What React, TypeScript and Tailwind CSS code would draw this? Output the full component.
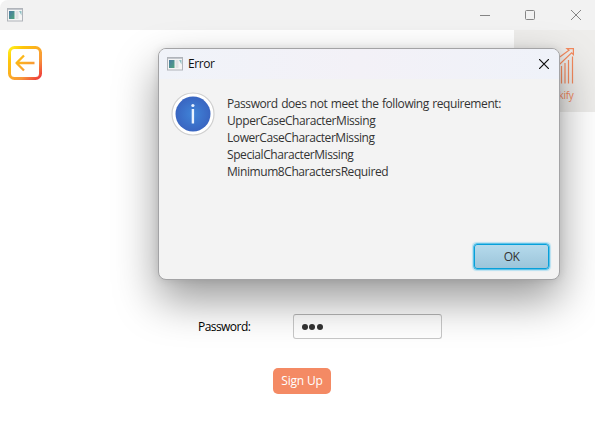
import React from 'react';

function AppIcon() {
  return (
    <svg width="16" height="14" viewBox="0 0 16 14" className="block shrink-0">
      <defs>
        <linearGradient id="pane" x1="0" y1="0" x2="1" y2="1">
          <stop offset="0" stopColor="#4a7aa4" />
          <stop offset="1" stopColor="#4fa37c" />
        </linearGradient>
      </defs>
      <rect x="0.5" y="0.5" width="15" height="12.5" fill="#f4f4f4" stroke="#b0b4ba" />
      <rect x="1" y="1" width="14" height="1" fill="#c3c7cd" />
      <rect x="2" y="3" width="5.5" height="8" fill="url(#pane)" />
      <rect x="8.5" y="3" width="3" height="8" fill="#e0e1e3" />
      <path d="M12 3H14.5V7.5Z" fill="#8fc0c4" />
    </svg>
  );
}

function TitleBar() {
  return (
    <header className="flex h-[30px] shrink-0 items-center justify-between rounded-tl-lg bg-[#f2f2f2] pr-[13px] pl-[7px]">
      <AppIcon />
      <div className="flex items-center">
        <svg width="102" height="12" viewBox="0 0 102 12" fill="none" stroke="#858585">
          <path d="M0 6.5H10" />
          <rect x="45.5" y="1.5" width="9" height="9" rx="1" />
          <path d="M91 1L101 11M101 1L91 11" />
        </svg>
      </div>
    </header>
  );
}

function BackIcon() {
  return (
    <svg width="34" height="34" viewBox="0 0 34 34" fill="none" className="mt-4 ml-2 block">
      <defs>
        <linearGradient id="fire" gradientUnits="userSpaceOnUse" x1="2" y1="2" x2="32" y2="32">
          <stop offset="0" stopColor="#ffee1c" />
          <stop offset="0.2" stopColor="#fec60a" />
          <stop offset="0.7" stopColor="#f8963a" />
          <stop offset="1" stopColor="#ef3b3b" />
        </linearGradient>
      </defs>
      <rect x="1.5" y="1.5" width="31" height="31" rx="5" stroke="url(#fire)" strokeWidth="3" />
      <path d="M26.5 17.01H8.5M16 9.5L8.5 17L16 24.5" stroke="url(#fire)" strokeWidth="2.3" strokeLinejoin="round" />
    </svg>
  );
}

function Logo() {
  return (
    <div className="flex h-[82px] w-[81px] flex-col items-end bg-[#eeedeb] pr-[21px]">
      <svg width="32" height="38" viewBox="0 0 32 38" className="mt-[17px] block shrink-0" fill="none" stroke="#f58a5e" strokeWidth="1.2">
        <path d="M14 12.7L27 3.2L25 1.6H31.4V7.6L29.6 5.8L14 20.8" />
        <path d="M19.5 36.5V19M23 36.5V16M26.5 36.5V13M30.5 36.5V9.5" />
      </svg>
      <span className="mt-[3px] mr-[0.5px] text-[10px] leading-[14px] tracking-[-0.3px] text-[#f5895c]">Stockify</span>
    </div>
  );
}

function InfoIcon() {
  return (
    <svg width="44" height="44" viewBox="0 0 44 44" className="block shrink-0">
      <defs>
        <radialGradient id="info">
          <stop offset="0" stopColor="#4084d8" />
          <stop offset="1" stopColor="#3965c1" />
        </radialGradient>
      </defs>
      <circle cx="22" cy="22" r="21" fill="#fff" stroke="#cfcfcf" strokeWidth="1.2" />
      <circle cx="22" cy="22" r="17.5" fill="url(#info)" />
      <rect x="20.7" y="17" width="2.4" height="14.5" fill="#eaf3ff" />
      <circle cx="21.9" cy="13.5" r="1.6" fill="#eaf3ff" />
    </svg>
  );
}

const messages = [
  'UpperCaseCharacterMissing',
  'LowerCaseCharacterMissing',
  'SpecialCharacterMissing',
  'Minimum8CharactersRequired',
];

function ErrorDialog() {
  return (
    <div role="dialog" className="absolute top-[48px] left-[158px] flex h-[232px] w-[402px] flex-col overflow-hidden rounded-[8px] border border-[#a3a3a5] bg-[#f3f3f3] shadow-[0_20px_44px_rgba(0,0,0,0.40),0_0_8px_rgba(0,0,0,0.10)]">
      <div className="flex h-[30px] shrink-0 items-center bg-linear-to-r from-[#f0f3f9] via-[#f3f1f7] to-[#eff2f9] pr-[10px] pl-2">
        <AppIcon />
        <span className="ml-[5px] text-[12px] leading-4 tracking-[-0.45px] text-[#111]">Error</span>
        <svg width="10" height="10" viewBox="0 0 10 10" className="ml-auto" stroke="#111" strokeWidth="1.2">
          <path d="M0 0L10 10M10 0L0 10" />
        </svg>
      </div>
      <div className="flex grow pt-[13px] pl-[12px]">
        <InfoIcon />
        <div className="ml-[12px] pt-[3px] text-[12px] leading-[17px] tracking-[-0.42px] whitespace-nowrap text-[#333]">
          <p className="[word-spacing:0.7px]">Password does not meet the following requirement:</p>
          {messages.map((m) => (
            <p key={m}>{m}</p>
          ))}
        </div>
      </div>
      <div className="flex justify-end pr-[10px] pb-[10px]">
        <button className="h-[25px] w-[75px] rounded-[3px] border border-[#06a0da] bg-linear-to-b from-[#b5daec] to-[#9cc5da] text-[12px] leading-4 tracking-[-0.6px] text-[#333] shadow-[0_0_0_0.5px_#06a0da,0_0_1px_1.5px_#b9e2f2]">OK</button>
      </div>
    </div>
  );
}

export default function App() {
  return (
    <div className="relative flex h-[427px] w-[595px] flex-col overflow-hidden bg-white font-['Open_Sans','Noto_Sans',sans-serif]">
      <TitleBar />
      <main className="flex grow flex-col">
        <div className="flex justify-between">
          <BackIcon />
          <Logo />
        </div>
        <form className="mt-[202px] flex flex-col">
          <div className="flex items-center pl-[198px]">
            <label className="w-[95px] text-[12px] leading-4 tracking-[-0.55px] text-black">Password:</label>
            <div className="flex h-[25px] w-[149px] items-center gap-[1px] rounded-[3px] border border-[#c8c8c8] border-t-[#b5b5b5] bg-white pt-px pl-2">
              {[0, 1, 2].map((n) => (
                <span key={n} className="mr-[0.3px] size-[6px] rounded-full bg-[#333]" />
              ))}
            </div>
          </div>
          <button type="button" className="mt-[29px] ml-[273px] h-[26px] w-[58px] rounded-[5px] bg-[#f48a64] text-[12px] leading-4 tracking-[-0.2px] text-white">Sign Up</button>
        </form>
      </main>
      <ErrorDialog />
    </div>
  );
}
